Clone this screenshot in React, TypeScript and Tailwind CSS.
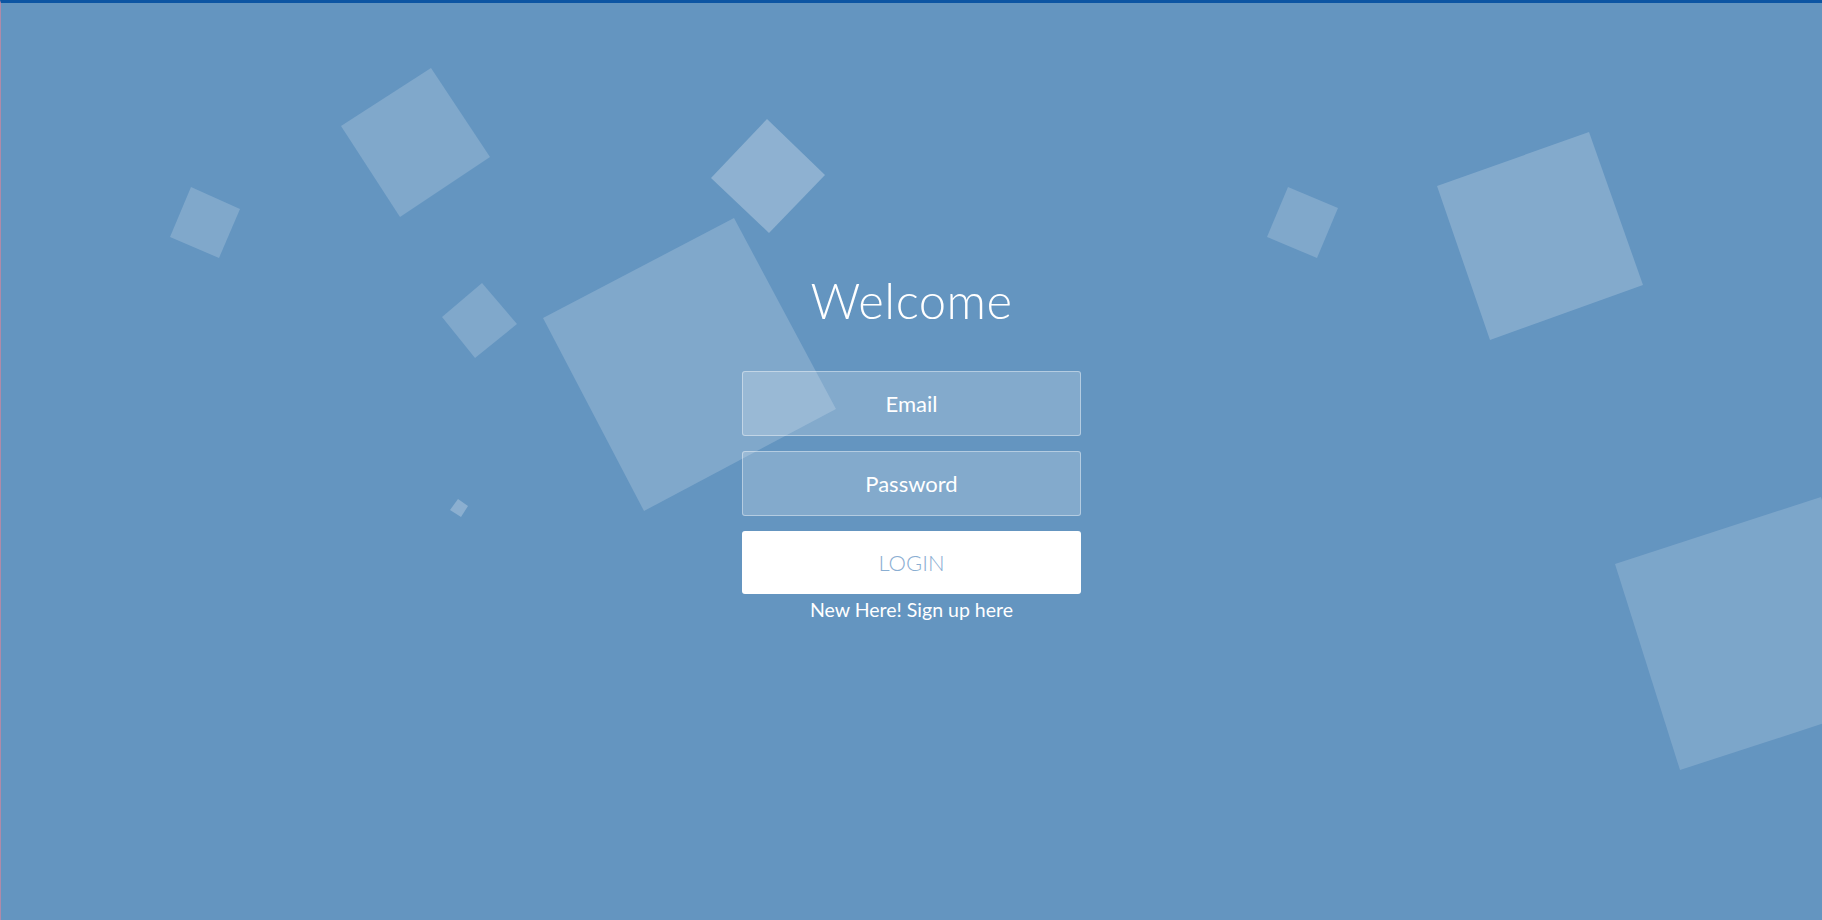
import React from 'react';

// translucent squares floating behind the form
const shapes: { points: string; opacity: number }[] = [
  { points: '191,187 240,209 219,258 170,237', opacity: 0.18 },
  { points: '431,68 490,157 400,217 341,126', opacity: 0.18 },
  { points: '767,119 825,175 769,233 711,178', opacity: 0.27 },
  { points: '482,283 517,324 475,358 442,317', opacity: 0.18 },
  { points: '734,218 836,409 644,511 543,318', opacity: 0.18 },
  { points: '458,499 468,506 461,517 450,510', opacity: 0.25 },
  { points: '1288,187 1338,208 1317,258 1267,237', opacity: 0.18 },
  { points: '1589,132 1643,285 1490,340 1437,186', opacity: 0.2 },
  { points: '1615,564 1821,497 1886,703 1680,770', opacity: 0.16 },
];

export default function App() {
  return (
    <div
      className="relative min-h-screen h-[920px] overflow-hidden bg-[#6495c0] border-t-[3px] border-t-[#0c55a3] border-l border-l-[#b08aa8]"
      style={{ fontFamily: 'Lato, "Open Sans", sans-serif' }}
    >
      <svg className="absolute -top-[3px] -left-px w-[1822px] h-[920px]" viewBox="0 0 1822 920">
        {shapes.map((s, i) => (
          <polygon key={i} points={s.points} fill="#ffffff" fillOpacity={s.opacity} />
        ))}
      </svg>

      <div className="relative flex flex-col items-center pt-[267px]">
        <h1 className="text-[49px] leading-[60px] font-light text-white tracking-[0.5px]">Welcome</h1>

        <form className="w-[339px] mt-[41px] flex flex-col" onSubmit={(e) => e.preventDefault()}>
          <input
            type="email"
            placeholder="Email"
            className="h-[65px] w-full rounded-[3px] border border-white/40 bg-white/20 text-center text-[22px] text-white placeholder:text-white outline-none"
          />
          <input
            type="password"
            placeholder="Password"
            className="h-[65px] w-full mt-[15px] rounded-[3px] border border-white/40 bg-white/20 text-center text-[22px] text-white placeholder:text-white outline-none"
          />
          <button
            type="submit"
            className="h-[63px] w-full mt-[15px] rounded-[3px] bg-white text-[22px] font-light text-[#8aaed2]"
          >
            LOGIN
          </button>
        </form>
        <p className="mt-[4px] text-[19.5px] leading-[24px] text-white">New Here! Sign up here</p>
      </div>
    </div>
  );
}
